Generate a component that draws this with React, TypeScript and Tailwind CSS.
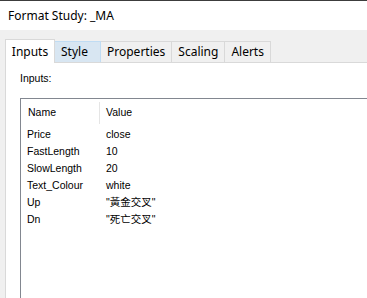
const rows: [string, string][] = [
  ['Price', 'close'],
  ['FastLength', '10'],
  ['SlowLength', '20'],
  ['Text_Colour', 'white'],
  ['Up', '"黃金交叉"'],
  ['Dn', '"死亡交叉"'],
]

const tabs = ['Style', 'Properties', 'Scaling', 'Alerts']

export default function App() {
  return (
    <div className="w-[367px] h-[298px] overflow-hidden bg-[#f0f0f0] border-t border-[#3c3c3c] flex flex-col font-['Noto_Sans',sans-serif] text-black">
      <div className="h-[29px] shrink-0 bg-white flex items-center pl-[8px] text-[12px]">Format Study: _MA</div>

      <div className="flex items-end pl-[5px] h-[32px] shrink-0">
        <div className="h-[24px] w-[50px] bg-white border border-b-0 border-[#d9d9d9] text-[12px] flex items-center justify-center relative z-10 -mb-px">
          Inputs
        </div>
        {tabs.map((t) => (
          <div
            key={t}
            className={
              t === 'Style'
                ? 'h-[21px] px-[6px] w-[46px] bg-[#d8e6f2] border border-b-0 border-l-0 border-[#c0dcf3] text-[12px] flex items-center'
                : 'h-[21px] px-[6px] bg-[#f0f0f0] border border-b-0 border-l-0 border-[#d9d9d9] text-[12px] flex items-center'
            }
          >
            {t}
          </div>
        ))}
      </div>

      <div className="flex-1 ml-[5px] bg-white border-l border-t border-[#d9d9d9] pl-[14px]">
        <div className="pt-[8px] h-[22px] text-[10.5px] font-['Liberation_Sans',sans-serif]">Inputs:</div>
        <div className="mt-[13px] h-[220px] pt-[2px] border-l border-t border-[#828790] font-['Liberation_Sans','Noto_Sans_CJK_TC',sans-serif] text-[10.5px]">
          <div className="flex h-[24px] items-center">
            <div className="w-[78px] pl-[7px]">Name</div>
            <div className="w-px h-[22px] bg-[#e5e5e5]" />
            <div className="pl-[6px]">Value</div>
          </div>
          <div className="pt-[1px]">
            {rows.map(([n, v]) => (
              <div key={n} className="flex h-[17px] items-center">
                <div className="w-[79px] pl-[6px]">{n}</div>
                <div className="pl-[6px]">{v}</div>
              </div>
            ))}
          </div>
        </div>
      </div>
    </div>
  )
}
